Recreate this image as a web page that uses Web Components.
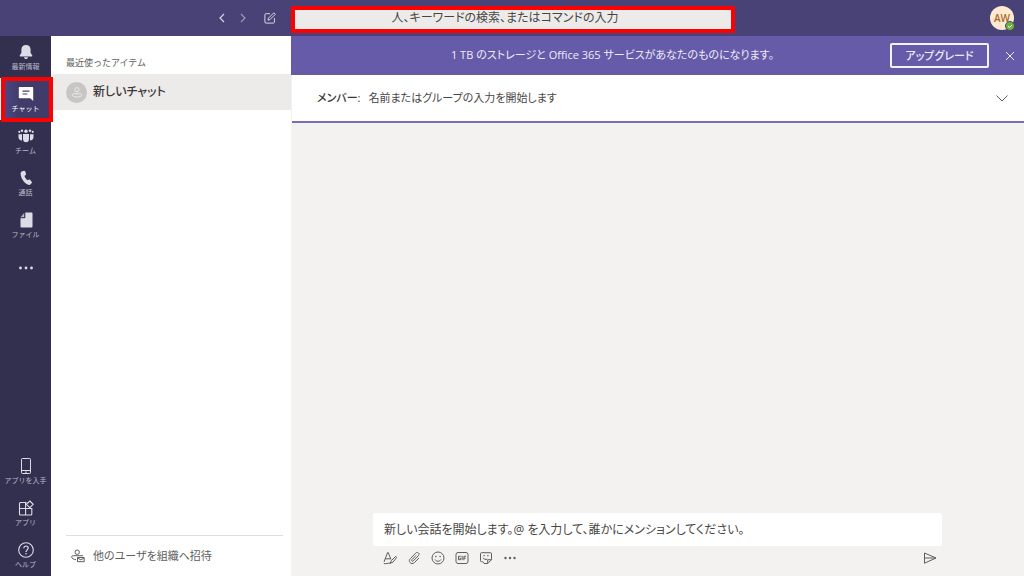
<!DOCTYPE html>
<html lang="ja">
<head>
<meta charset="utf-8">
<meta name="viewport" content="width=device-width, initial-scale=1">
<title>チャット</title>
<style>
  :root {
    --bar: #494277;
    --rail: #33304f;
    --brand: #665ba9;
    --canvas: #f3f2f1;
    --ink: #3b3a39;
    --muted: #605e5c;
    --alert: #ff0000;
  }
  body {
    margin: 0;
    font-family: "Open Sans", "Noto Sans CJK JP", sans-serif;
    font-size: 11px;
    line-height: 16px;
    font-feature-settings: "palt";
    color: var(--ink);
  }
</style>
</head>
<body>
<chat-app></chat-app>

<script>
const ICONS = {
  bell: [16, '<path fill="currentColor" d="M8 1c3 0 4.6 2 4.6 4.8v3l1.7 2.7c.2.5 0 .9-.5.9H2.200c-.5 0-.7-.4-.5-.9l1.700-2.700v-3C3.400 3 5 1 8 1zM6 13.200h4c-.1 1.200-.9 1.800-2 1.800s-1.900-.6-2-1.800z"/>'],
  chat: [16, '<path fill="currentColor" d="M1.800 1h12.400c.6 0 1 .4 1 1v13l-3-2.700H1.800c-.6 0-1-.4-1-1V2c0-.6.4-1 1-1z"/><path stroke="#454072" stroke-width="1.200" d="M4.500 5.200h7M4.500 8h5"/>'],
  team: [16, '<g fill="currentColor"><circle cx="8" cy="3.200" r="1.700"/><circle cx="4" cy="2.700" r="1.200"/><circle cx="12" cy="2.700" r="1.200"/><circle cx="1.300" cy="3.800" r="1.100"/><circle cx="14.700" cy="3.800" r="1.100"/><path d="M5 6h6v5c0 2-1.200 3.300-3 3.300S5 13 5 11zM.5 6.200H4v6.200C1.800 12.300.5 11 .5 9.200zM12 6.200h3.500v3c0 1.800-1.300 3.100-3.500 3.200z"/></g>'],
  phone: [16, '<path fill="currentColor" d="M4.200 1.200l1.900-.4c.5-.1.9.1 1.100.6l.9 2.300c.1.400 0 .8-.3 1.100L6.500 6c.5 1.500 1.600 3.200 2.900 4.200l1.800-.6c.4-.1.800 0 1.100.3l1.500 2c.3.400.3.900-.1 1.200l-1.400 1.300c-.6.5-1.400.7-2.100.4C6 13.200 2.900 8.300 2.600 3.800c0-1.200.6-2.300 1.600-2.600z"/>'],
  file: [16, '<path fill="currentColor" d="M7.300.5h6.200c.6 0 1 .4 1 1v13c0 .6-.4 1-1 1h-10c-.6 0-1-.4-1-1V6.300h3.800c.6 0 1-.4 1-1z"/><path fill="currentColor" d="M6.200 1v4.200H2.500z" opacity=".75"/>'],
  more: [16, '<g fill="currentColor"><circle cx="2.500" cy="8" r="1.400"/><circle cx="8" cy="8" r="1.400"/><circle cx="13.500" cy="8" r="1.400"/></g>'],
  dots: [14, '<g fill="currentColor"><circle cx="2.500" cy="7" r="1.200"/><circle cx="7" cy="7" r="1.200"/><circle cx="11.500" cy="7" r="1.200"/></g>'],
  mobile: [16, '<g fill="none" stroke="currentColor"><rect x="3.500" y=".5" width="9" height="15" rx=".8"/><path d="M3.500 12.500h9"/></g><path fill="currentColor" d="M7.300 13.500h1.400v1.200H7.300z"/>'],
  apps: [16, '<g fill="none" stroke="currentColor" stroke-width="1.100"><path d="M8.500 2.500h-6a1 1 0 0 0-1 1V14a1 1 0 0 0 1 1h10.300a1 1 0 0 0 1-1V8.500H1.500M7.600 2.500V15"/><path d="M11.800 1l3.400 3.300-3.400 3.400-3.400-3.400z"/></g>'],
  help: [16, '<circle cx="8" cy="8" r="7.300" fill="none" stroke="currentColor" stroke-width="1.100"/><path fill="none" stroke="currentColor" stroke-width="1.200" d="M5.800 6.200c0-1.400 1-2.200 2.200-2.200s2.200.8 2.200 2.100C10.200 7.800 8 7.900 8 10"/><circle cx="8" cy="11.800" r=".8" fill="currentColor"/>'],
  back: [12, '<path fill="none" stroke="currentColor" stroke-width="1.200" d="M8 2L4 6l4 4"/>'],
  forward: [12, '<path fill="none" stroke="currentColor" stroke-width="1.200" d="M4 2l4 4-4 4"/>'],
  compose: [12, '<g fill="none" stroke="currentColor"><path d="M6 1.700H1.900a1 1 0 0 0-1 1v7.400a1 1 0 0 0 1 1h7.500a1 1 0 0 0 1-1V6"/><path d="M4 8.200l.5-2.100L9.800.8l1.500 1.500L6 7.600z"/></g>'],
  close: [12, '<path stroke="currentColor" d="M2 2l8 8M10 2l-8 8"/>'],
  down: [12, '<path fill="none" stroke="currentColor" d="M.5 3.500L6 9l5.500-5.500"/>'],
  person: [12, '<g fill="none" stroke="currentColor"><circle cx="6" cy="3.700" r="2.100"/><path d="M3.600 7.600h4.800c1.400 0 2.300.5 2.300 1.500s-1.700 1.900-4.700 1.900-4.700-.9-4.700-1.900.9-1.500 2.300-1.500z"/></g>'],
  invite: [14, '<g fill="none" stroke="currentColor"><circle cx="6.200" cy="3.200" r="2.200"/><path d="M12 6.700H2.200C1 6.700.7 7.200.7 7.900c0 1.500 1.700 2.600 4.300 2.800M6.500 8.500h6.700v4.200H6.500zM6.700 9l3.100 1.800L13 9"/></g>'],
  format: [14, '<g fill="none" stroke="currentColor"><path d="M1 11L4.600 1.500h.6L8 8.500M2.200 7.800h5.300"/><path d="M12.800 5.300L8.500 9.500 7 12.300l3-1.200 3.600-4.500zM.8 12.500c2 .8 4-.7 6.500-.2"/></g>'],
  clip: [14, '<path fill="none" stroke="currentColor" stroke-linecap="round" d="M11.700 7.200l-4.200 4.300c-3 2.900-7-.9-4.200-3.900l5.400-5.500c1.900-1.800 4.500.7 2.700 2.600L6.300 9.900c-1.100 1-2.300-.2-1.300-1.300l3.800-3.900"/>'],
  smile: [14, '<g fill="none" stroke="currentColor"><circle cx="7" cy="7" r="6"/><path d="M4 8.500c1.200 2.300 4.800 2.300 6 0"/></g><g fill="currentColor"><circle cx="4.900" cy="5.500" r=".8"/><circle cx="9.100" cy="5.500" r=".8"/></g>'],
  gif: [14, '<g fill="none" stroke="currentColor"><rect x="1" y="1.500" width="12" height="11" rx="2"/><path d="M5.700 5.300H3.500v3.400h2V7.200h-.9M7.100 4.800v4.400M11 5.300H8.900v3.900M8.900 7.200h1.800"/></g>'],
  sticker: [14, '<g fill="none" stroke="currentColor"><path d="M8.700 12.500H5L3.700 10.700H2.500a1 1 0 0 1-1-1v-7a1 1 0 0 1 1-1h9a1 1 0 0 1 1 1v6zM8.700 12.300V8.700h3.600"/><path d="M4 6.800c.6 1.400 2.600 2 4.200 1.300"/></g><path fill="currentColor" d="M4.500 4h1.200v1.200H4.500zM8.300 4h1.200v1.200H8.300z"/>'],
  send: [14, '<path fill="none" stroke="currentColor" stroke-linejoin="round" d="M1.500 2l11.500 5L1.500 12.200V2zM1.500 7H13"/>'],
  check: [6, '<path fill="none" stroke="#fff" d="M1 3l1.500 1.500L5 2"/>']
};

const RESET = `
  *, *::before, *::after { box-sizing: border-box; }
  :host { display: block; }
  button, input {
    margin: 0; padding: 0; border: 0; background: none;
    font: inherit; font-feature-settings: inherit; color: inherit; border-radius: 0;
  }
  button { display: flex; align-items: center; justify-content: center; cursor: pointer; }
  input::placeholder { color: inherit; opacity: 1; }
`;

const define = (name, css, render) => customElements.define(name, class extends HTMLElement {
  constructor() {
    super();
    this.attachShadow({ mode: "open" });
  }
  connectedCallback() {
    this.shadowRoot.innerHTML = `<style>${RESET}${css}</style>${render(this)}`;
  }
});

define("ui-icon", `
  :host { display: block; flex: none; }
  svg { display: block; }
`, el => {
  const [box, body] = ICONS[el.getAttribute("name")];
  return `<svg width="${box}" height="${box}" viewBox="0 0 ${box} ${box}" aria-hidden="true">${body}</svg>`;
});

define("icon-button", `
  button { width: var(--hit, 24px); height: 24px; }
`, el => `<button type="button" aria-label="${el.getAttribute("label")}"><ui-icon name="${el.getAttribute("icon")}"></ui-icon></button>`);

define("rail-item", `
  :host { position: relative; color: #dddce6; }
  button { width: 100%; height: 42px; padding-top: 2px; flex-direction: column; gap: 2px; }
  span { font-size: 7px; line-height: 10px; white-space: nowrap; color: #bab8c9; font-feature-settings: normal; }
  :host([active]) { color: #fff; }
  :host([active]) button { background: linear-gradient(90deg, #504989, #403b68 40%); box-shadow: inset 1px 0 #fff; }
  :host([active]) span { color: #fff; }
  :host([active])::after {
    content: ""; position: absolute; inset: -1px -2px -2px 1px;
    border: 4px solid var(--alert); z-index: 2; pointer-events: none;
  }
`, el => {
  const label = el.getAttribute("label");
  const icon = `<ui-icon name="${el.getAttribute("icon")}"></ui-icon>`;
  return label ? `<button type="button">${icon}<span>${label}</span></button>`
               : `<button type="button" aria-label="その他">${icon}</button>`;
});

define("app-rail", `
  :host { display: flex; background: var(--rail); }
  nav { flex: 1; display: flex; flex-direction: column; justify-content: space-between; min-width: 0; }
`, () => `
  <nav aria-label="アプリ">
    <div>
      <rail-item icon="bell" label="最新情報"></rail-item>
      <rail-item icon="chat" label="チャット" active></rail-item>
      <rail-item icon="team" label="チーム"></rail-item>
      <rail-item icon="phone" label="通話"></rail-item>
      <rail-item icon="file" label="ファイル"></rail-item>
      <rail-item icon="more"></rail-item>
    </div>
    <div>
      <rail-item icon="mobile" label="アプリを入手"></rail-item>
      <rail-item icon="apps" label="アプリ"></rail-item>
      <rail-item icon="help" label="ヘルプ"></rail-item>
    </div>
  </nav>`);

define("user-avatar", `
  :host { position: relative; }
  button {
    width: 24px; height: 24px; border-radius: 50%; background: #ffe9d1; color: #a5692c;
    font-size: 10px; font-weight: 600;
  }
  .status {
    position: absolute; right: -1px; bottom: -1px; width: 10px; height: 10px; border-radius: 50%;
    background: #6bb53c; border: 1px solid var(--bar); display: grid; place-items: center;
  }
`, () => `<button type="button" aria-label="AW プロフィール">AW</button><span class="status"><ui-icon name="check"></ui-icon></span>`);

define("top-bar", `
  :host {
    display: grid; grid-template-columns: 291px minmax(0, 1fr) 289px; align-items: center;
    height: 36px; background: var(--bar); color: #d6d4e4;
  }
  .tools { display: flex; justify-content: flex-end; padding-right: 11px; --hit: 21px; }
  .forward { opacity: .6; margin-right: 6px; }
  .search { height: 27px; border: 4px solid var(--alert); background: #edebe9; color: #484644; display: flex; margin-top: 2px; }
  input { width: 100%; padding: 0 16px 2px 0; text-align: center; font-size: 12px; }
  .account { display: flex; justify-content: flex-end; padding-right: 10px; }
`, () => `
  <div class="tools">
    <icon-button icon="back" label="戻る"></icon-button>
    <icon-button class="forward" icon="forward" label="進む"></icon-button>
    <icon-button icon="compose" label="新しいチャット"></icon-button>
  </div>
  <div class="search"><input type="text" aria-label="検索" placeholder="人、キーワードの検索、またはコマンドの入力"></div>
  <div class="account"><user-avatar></user-avatar></div>`);

define("chat-list", `
  :host { display: flex; flex-direction: column; background: #fff; }
  h2 { margin: 0; padding: 19px 15px 3px; font-size: 9px; line-height: 16px; font-weight: 400; color: var(--muted); font-feature-settings: normal; }
  .item { width: 100%; height: 36px; justify-content: flex-start; gap: 6px; padding: 0 15px; background: #edebe9; font-size: 12px; font-weight: 500; }
  .face { width: 21px; height: 21px; border-radius: 50%; background: #c8c6c4; color: #edebe9; display: grid; place-items: center; }
  footer { margin: auto 8px 0 15px; border-top: 1px solid #e1dfdd; }
  .invite { height: 40px; gap: 8px; padding-left: 5px; color: var(--muted); }
`, () => `
  <h2>最近使ったアイテム</h2>
  <button type="button" class="item"><span class="face"><ui-icon name="person"></ui-icon></span>新しいチャット</button>
  <footer><button type="button" class="invite"><ui-icon name="invite"></ui-icon>他のユーザを組織へ招待</button></footer>`);

define("upgrade-banner", `
  :host {
    display: flex; align-items: center; height: 39px; padding-right: 2px;
    background: var(--brand); color: #eeecf8;
  }
  p { flex: 1; margin: 0; padding: 0 0 2px 44px; text-align: center; }
  .upgrade { width: 99px; height: 25px; border: 2px solid #f3f2fb; border-radius: 2px; margin-right: 9px; font-weight: 500; }
`, () => `
  <p>1 TB のストレージと Office 365 サービスがあなたのものになります。</p>
  <button type="button" class="upgrade">アップグレード</button>
  <icon-button icon="close" label="閉じる"></icon-button>`);

define("member-field", `
  :host {
    display: flex; align-items: center; gap: 8px; height: 48px; margin-left: 1px; padding: 0 10px 0 25px;
    background: #fff; border-bottom: 2px solid #786eb5;
  }
  label { font-weight: 500; }
  input { flex: 1; min-width: 0; color: #484644; }
  icon-button { color: var(--muted); }
`, () => `
  <label for="members">メンバー:</label>
  <input id="members" type="text" placeholder="名前またはグループの入力を開始します">
  <icon-button icon="down" label="展開"></icon-button>`);

define("message-composer", `
  :host { padding: 0 82px 6px; color: var(--muted); }
  input { display: block; width: 100%; height: 33px; padding: 0 11px; background: #fff; border-radius: 2px; color: #484644; font-size: 12px; }
  .tools { display: flex; padding: 0 0 0 5px; }
  .send { margin-left: auto; }
`, () => `
  <input type="text" aria-label="メッセージ" placeholder="新しい会話を開始します。@ を入力して、誰かにメンションしてください。">
  <div class="tools">
    <icon-button icon="format" label="書式"></icon-button>
    <icon-button icon="clip" label="添付"></icon-button>
    <icon-button icon="smile" label="絵文字"></icon-button>
    <icon-button icon="gif" label="GIF"></icon-button>
    <icon-button icon="sticker" label="ステッカー"></icon-button>
    <icon-button icon="dots" label="その他のオプション"></icon-button>
    <icon-button class="send" icon="send" label="送信"></icon-button>
  </div>`);

define("chat-app", `
  :host { display: grid; grid-template: auto minmax(0, 1fr) / 51px 240px minmax(0, 1fr); min-height: 100vh; background: var(--canvas); }
  top-bar { grid-column: 1 / -1; }
  main { display: flex; flex-direction: column; min-width: 0; }
  message-composer { margin-top: auto; }
`, () => `
  <top-bar></top-bar>
  <app-rail></app-rail>
  <chat-list></chat-list>
  <main>
    <upgrade-banner></upgrade-banner>
    <member-field></member-field>
    <message-composer></message-composer>
  </main>`);
</script>
</body>
</html>
